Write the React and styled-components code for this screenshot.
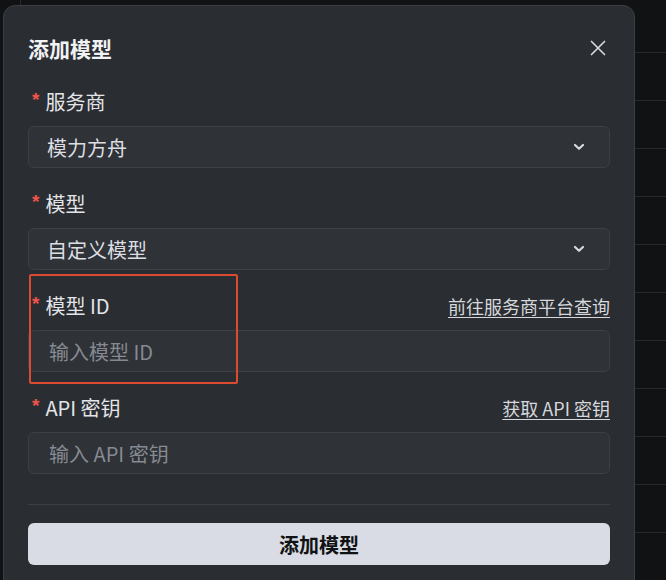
import React from 'react';
import styled, { createGlobalStyle } from 'styled-components';

const fields = [
  { label: '服务商', kind: 'select', value: '模力方舟' },
  { label: '模型', kind: 'select', value: '自定义模型' },
  { label: '模型 ID', kind: 'input', placeholder: '输入模型 ID', link: '前往服务商平台查询', highlight: true },
  { label: 'API 密钥', kind: 'input', placeholder: '输入 API 密钥', link: '获取 API 密钥' },
];

const CloseIcon = () => (
  <svg width="16" height="16" viewBox="0 0 16 16" fill="none">
    <path d="M1.5 1.5 L14.5 14.5 M14.5 1.5 L1.5 14.5" stroke="currentColor" strokeWidth="1.7" strokeLinecap="round" />
  </svg>
);

const ChevronIcon = () => (
  <svg width="12" height="8" viewBox="0 0 12 8" fill="none">
    <path d="M2 2 L6 5.8 L10 2" stroke="currentColor" strokeWidth="2.2" strokeLinecap="round" strokeLinejoin="round" />
  </svg>
);

const App = () => {
  return (
    <>
      <GlobalStyle />
      <Page>
        <Backdrop>
          {Array.from({ length: 12 }).map((_, i) => (
            <BackRow key={i} first={i === 0} />
          ))}
        </Backdrop>
        <Modal>
          <Header>
            <Title>添加模型</Title>
            <CloseButton aria-label="关闭">
              <CloseIcon />
            </CloseButton>
          </Header>
          <Form>
            {fields.map((f) => (
              <Field key={f.label}>
                {f.highlight && <Highlight />}
                <LabelRow>
                  <Label>
                    <Star>*</Star>
                    {f.label}
                  </Label>
                  {f.link && <Link href="#">{f.link}</Link>}
                </LabelRow>
                {f.kind === 'select' ? (
                  <Select>
                    <span>{f.value}</span>
                    <Chevron>
                      <ChevronIcon />
                    </Chevron>
                  </Select>
                ) : (
                  <Input placeholder={f.placeholder} />
                )}
              </Field>
            ))}
          </Form>
          <Divider />
          <SubmitButton>添加模型</SubmitButton>
        </Modal>
      </Page>
    </>
  );
};

const GlobalStyle = createGlobalStyle`
  html, body {
    margin: 0;
    padding: 0;
    background: #111214;
    overflow: hidden;
  }
  body {
    font-family: "Noto Sans CJK SC", "Noto Sans", sans-serif;
  }
  * { box-sizing: border-box; }
`;

const Page = styled.div`
  position: relative;
  width: 666px;
  height: 580px;
  overflow: hidden;
  background: #111214;
`;

const Backdrop = styled.div`
  display: flex;
  flex-direction: column;
  margin-left: 20px;
  border-left: 1px solid #26282c;
  height: 100%;
`;

const BackRow = styled.div`
  height: ${(p) => (p.first ? '53px' : '48px')};
  flex-shrink: 0;
  border-bottom: 1px solid #26282c;
`;

const Modal = styled.div`
  position: absolute;
  left: 3px;
  top: 5px;
  width: 632px;
  height: 600px;
  padding: 24px 24px;
  background: #2a2d32;
  border: 1px solid #3a3d43;
  border-radius: 12px;
  display: flex;
  flex-direction: column;
`;

const Header = styled.div`
  display: flex;
  align-items: center;
  justify-content: space-between;
  height: 36px;
  margin-bottom: 24px;
`;

const Title = styled.h2`
  margin: 0;
  font-size: 21px;
  font-weight: 700;
  color: #f1f2f4;
  line-height: 36px;
`;

const CloseButton = styled.button`
  display: flex;
  align-items: center;
  justify-content: center;
  width: 24px;
  height: 24px;
  padding: 0;
  border: none;
  background: transparent;
  color: #d3d6da;
`;

const Form = styled.div`
  display: flex;
  flex-direction: column;
  gap: 24px;
`;

const Field = styled.div`
  position: relative;
  display: flex;
  flex-direction: column;
  gap: 12px;
`;

const Highlight = styled.div`
  position: absolute;
  left: 1px;
  top: -20px;
  width: 209px;
  height: 110px;
  border: 2px solid #dc4a2f;
  border-radius: 2px;
  pointer-events: none;
  z-index: 2;
`;

const LabelRow = styled.div`
  display: flex;
  align-items: center;
  justify-content: space-between;
  height: 24px;
`;

const Label = styled.label`
  display: flex;
  align-items: center;
  font-size: 20px;
  font-weight: 400;
  color: #e3e5e8;
  line-height: 24px;
`;

const Star = styled.span`
  font-family: "Liberation Sans", sans-serif;
  font-size: 19px;
  font-weight: 700;
  color: #f0544c;
  margin: 0 6px 0 4px;
  position: relative;
  top: -2px;
`;

const Link = styled.a`
  font-size: 18px;
  color: #d6d8dc;
  text-decoration: underline;
  text-underline-offset: 3px;
  line-height: 24px;
`;

const Select = styled.div`
  display: flex;
  align-items: center;
  justify-content: space-between;
  height: 42px;
  padding: 0 24px 0 18px;
  background: #2f3237;
  border: 1px solid #3c3f46;
  border-radius: 6px;
  font-size: 20px;
  color: #dcdee2;
`;

const Chevron = styled.span`
  display: flex;
  color: #d8dadf;
`;

const Input = styled.input`
  height: 42px;
  padding: 0 20px;
  background: #2f3237;
  border: 1px solid #3c3f46;
  border-radius: 6px;
  font-family: inherit;
  font-size: 20px;
  color: #dcdee2;
  outline: none;

  &::placeholder {
    color: #868a92;
  }
`;

const Divider = styled.div`
  height: 1px;
  background: #3b3e44;
  margin: 30px 0 18px;
`;

const SubmitButton = styled.button`
  height: 42px;
  border: none;
  border-radius: 6px;
  background: #d9dce4;
  color: #111214;
  font-family: inherit;
  font-size: 20px;
  font-weight: 700;
`;

export default App;
